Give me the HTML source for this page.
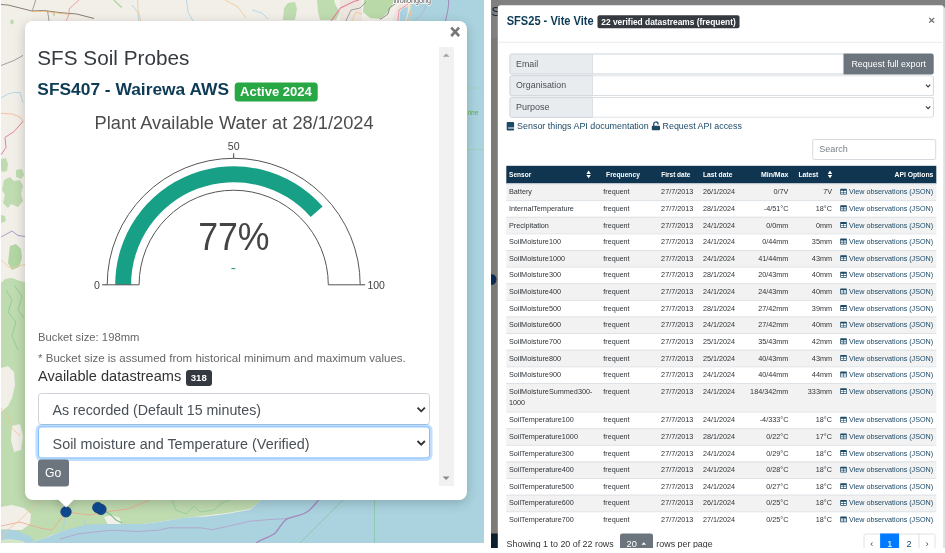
<!DOCTYPE html>
<html lang="en"><head><meta charset="utf-8"><title>SFS Soil Probes</title>
<style>
html,body{margin:0;padding:0;background:#fff;}
body{width:945px;height:553px;position:relative;overflow:hidden;font-family:"Liberation Sans",sans-serif;}
.pane{position:absolute;left:0;top:0;overflow:hidden;}
svg{position:absolute;left:0;top:0;overflow:hidden;will-change:transform;}
svg text{font-family:"Liberation Sans",sans-serif;white-space:pre;}
div{box-sizing:border-box;}
</style></head><body>

<div class="pane" id="map-pane" style="width:484px;height:543px;">
<svg id="map" width="484" height="543" viewBox="0 0 484 543">
<rect x="1" y="0" width="483" height="543" fill="#f2efe9"/>
<!-- forest / vegetation -->
<g fill="#bfdbb0">
<path d="M1 283 L5 279 L12 278 L20 281 L60 290 L60 470 L290 470 L262 499 L258 503 L250 509 L227 513 L185 518 L143 524 L106 525 L66 530 L30 543 L1 543Z"/>
<path d="M1 159 L6 158 L8 164 L7 171 L2 172 L1 170Z"/>
<path d="M16 170 L22 169 L24 175 L21 179 L16 177Z"/>
<path d="M4 180 L10 177 L14 181 L20 180 L23 186 L21 194 L23 201 L18 207 L11 204 L8 208 L3 203 L5 195 L2 190Z"/>
<path d="M1 215 L5 216 L6 221 L2 223 L1 222Z"/>
<path d="M10 246 L16 244 L21 249 L22 258 L19 267 L12 270 L8 263 L9 254Z" fill="#b2d6a3"/>
<path d="M283 20 L284 8 L288 3 L295 2 L297 9 L295 20Z"/>
<path d="M317 0 L334 0 L336 6 L340 12 L336 20 L320 20 L318 12Z"/>
<path d="M364 0 L394 0 L392 6 L388 12 L380 19 L370 18 L363 12Z" fill="#b9d9a9"/>
<ellipse cx="12" cy="22" rx="1.800" ry="2.400"/><ellipse cx="54" cy="13.500" rx="1.200" ry="2.500"/>
</g>
<g fill="#f2efe9">
<path d="M1 368 L8 366 L14 372 L15 385 L12 398 L8 406 L1 412Z"/>
<path d="M12 426 L20 424 L23 436 L21 450 L14 452 L11 440Z"/>
<path d="M1 507 L12 505 L24 508 L31 514 L30 524 L22 530 L8 530 L1 529Z"/>
<path d="M104 517 L112 515 L120 518 L121 524 L108 525Z"/>
</g>
<path d="M340 0 L362 0 L362 21 L340 21Z M392 21 L396 8 L402 2 L413 0 L409 12 L405 21Z" fill="#ece6df"/>
<!-- water -->
<path d="M413 0 L484 0 L484 543 L30 543 L53 535 L66 529.700 L87 524.400 L106 523.900 L143 523.900 L164 521.200 L185 517.800 L206 516.500 L227.500 513.800 L250 509.800 L258 503 L262 499 L406 21 L409 12Z" fill="#aad3df"/>
<path d="M399.500 21 L400 12 L403 8.500 L408 6.500 L407.500 13 L405.500 21Z" fill="#aad3df"/>
<path d="M1 531 L8 529 L18 531 L24 534 L30 536 L34 541 L30 543 L1 543Z" fill="#aad3df"/>
<path d="M1 540 L10 539 L22 541 L26 543 L1 543Z" fill="#d5e6c8"/>
<!-- roads / lines -->
<g fill="none" stroke-width="0.8">
<path d="M1 4.500 L8 5 L32 11 L43.600 10.500 L61 12.700 L76.700 14 L94 18.500" stroke="#8a7f74" stroke-width="1"/>
<path d="M32 11.600 L43.600 11.300 L61 13.500 L70 14.500" stroke="#f0bb78"/>
<path d="M35.700 0 L32.300 11" stroke="#8a8a8a"/>
<path d="M47.600 11 L49 21" stroke="#8a8a8a"/>
<path d="M79 0 L69 9 L69.300 14 L66 21" stroke="#ea8f8f"/>
<path d="M137.600 0 L138 10 L140.700 21" stroke="#f3c58e"/>
<path d="M132 5 L137.500 12 L139 21" stroke="#a6d0e4"/>
<path d="M186.500 0 L188 12 L193 21" stroke="#a6d0e4"/>
<path d="M113.700 0 L121.700 7.500" stroke="#a7d79b" stroke-width="1.300"/>
<path d="M225 0 L238 7 L246 18" stroke="#f3c58e"/>
<path d="M252 10 L262 13 L268 19" stroke="#a6d0e4"/>
<path d="M1 65.500 L14 60.500 L23 55.400" stroke="#8a8a8a"/>
<path d="M1 98 L8 94 L14 92.500 L20 92.500 L23 102.600" stroke="#a6d0e4"/>
<path d="M1 113.300 L12 114 L20 117 L23 121.400" stroke="#f3b58e"/>
<path d="M23 121.400 L14 131.600 L5 137.400 L6 147.500 L1 154.800" stroke="#e87f9c" stroke-width="1"/>
<path d="M1 237 L12 231 L18 235.500 L25 236.400" stroke="#9b86c0"/>
<path d="M1 259.600 L10 268 L25 264.500" stroke="#f3c58e"/>
<path d="M6 290 L12 300 L8 312 L16 322 L12 336 L18 350" stroke="#8cc79a"/>
<path d="M14 285 L22 296 L18 310 L24 318" stroke="#8cc79a"/>
<path d="M1 408 L8 416 L12 428 L20 436" stroke="#f3c58e"/>
<path d="M331 21 L340.500 8 L353.800 1.500 L359 0" stroke="#e87f9c" stroke-width="1.200"/>
<path d="M345.800 21 L351 10 L360 8 L366 2" stroke="#8a8a8a"/>
<path d="M352 21 L356 12 L362 14" stroke="#f3c58e"/>
<path d="M380 19.500 L388 14 L389.500 8 L396.400 3" stroke="#777" />
<path d="M397.800 21 L399 10 L405.300 6 L408.800 3" stroke="#e87f9c"/>
<path d="M411 4 L411.500 10 L408.500 21" stroke="#f3c58e" stroke-width="1.200"/>
<path d="M1 526 L20 522 L40 528 L52 530 L60 520 L66 512 L90 515 L112 511 L128 509 L150 500" stroke="#f0a58c"/>
<path d="M1 538 L10 528 L22 518 L32 508 L40 499" stroke="#f3c79a"/>
<path d="M66 512 L64 525 L60 535" stroke="#a6d0e4"/>
<path d="M84 520 L86 527" stroke="#a6d0e4"/>
<path d="M100 509 L110 514 L116 520 L122 523" stroke="#7cc08c" stroke-width="1.200"/>
<path d="M172 499 L176 510 L186 514 L194 506 L200 512 L214 510 L222 503 L232 499" stroke="#8fcc9a"/>
<path d="M60 539 L79 533.700 L111 530.200 L137.600 531.500 L158.700 530.200 L169 527.800 L201 527.800 L211.600 529.700 L224.900 527 L250 521.200 L270 519.500 L287.600 518.600" stroke="#b3a3cc" stroke-width="0.900"/>
<path d="M255.900 543 C264 538 270 537 274.400 533.700 S282 521 287.600 518.600 S300 516 306.100 512.500 S315 504 319.400 499" stroke="#a487bd" stroke-width="1.300"/>
<path d="M300 543 L344 499" stroke="#86c6a8"/>
<path d="M374.500 499 L374.500 543" stroke="#86c6a8"/>
<path d="M467 88 L484 88 M467 149.500 L484 149.500" stroke="#9dd3bd" stroke-width="1.200"/>
<path d="M448.700 0 C449 7 447 14 445.500 21" stroke="#a487bd" stroke-width="1"/>
<path d="M426.500 0 C426 8 423 15 415 20" stroke="#b7a9cf" stroke-width="0.700"/>
</g>
<text x="393" y="2.600" font-size="7.600" fill="#555" stroke="#fff" stroke-width="1.500" paint-order="stroke" textLength="38" lengthAdjust="spacingAndGlyphs">Wollongong</text>
<text x="467.500" y="115" font-size="6.500" font-style="italic" fill="#5fb04a">rine</text>
<!-- markers -->
<g fill="#0d4a94" stroke="#1d3f6e" stroke-width="0.8">
<circle cx="101" cy="509.400" r="5.200"/><circle cx="97.800" cy="507.600" r="5.200"/><circle cx="66" cy="511.800" r="5.200"/>
</g>
</svg>
<div id="popup" style="position:absolute;left:0;top:0;transform:translate(25px,21px);width:442px;height:478.6px;background:#fff;border-radius:8px;box-shadow:0 3px 12px rgba(0,0,0,.2);"></div>
<div id="popup-tip-container" style="position:absolute;left:46px;top:499px;width:40px;height:20px;overflow:hidden;"><div style="position:absolute;left:13.8px;top:-6.2px;width:12.4px;height:12.4px;background:#fff;transform:rotate(45deg);box-shadow:0 3px 12px rgba(0,0,0,.2);"></div></div>
<div style="position:absolute;left:0;top:0;transform:translate(439.00px,47.00px);width:14.50px;height:438.60px;background:#f1f1f1;"></div>
<div style="position:absolute;left:0;top:0;transform:translate(234.70px,82.40px);width:82.80px;height:19.00px;background:#28a745;border-radius:3.5px;"></div>
<div style="position:absolute;left:0;top:0;transform:translate(186.00px,370.00px);width:25.60px;height:15.90px;background:#343a40;border-radius:3px;"></div>
<div style="position:absolute;left:0;top:0;transform:translate(38.00px,393.00px);width:391.60px;height:32.00px;background:#fff;border:1px solid #ced4da;border-radius:3.5px;"></div>
<div style="position:absolute;left:0;top:0;transform:translate(38.00px,426.40px);width:391.60px;height:32.40px;background:#fff;border:1px solid #80bdff;border-radius:3.5px;box-shadow:0 0 0 2.5px rgba(0,123,255,.25);"></div>
<div style="position:absolute;left:0;top:0;transform:translate(38.00px,459.40px);width:30.90px;height:26.50px;background:#6c757d;border-radius:3px;"></div>
<svg id="popup-content" width="484" height="543" viewBox="0 0 484 543">
<path d="M115.20 284.80 A118.5 118.5 0 0 1 322.59 206.43 L310.66 216.95 A102.6 102.6 0 0 0 131.10 284.80Z" fill="#17a085"/>
<path d="M107.20 284.80 A126.5 126.5 0 0 1 360.20 284.80 L328.30 284.80 A94.6 94.6 0 0 0 139.10 284.80Z" fill="none" stroke="#555" stroke-width="1"/>
<path d="M233.70 158.30v-5 M107.20 284.80h-5 M360.20 284.80h5" stroke="#444" stroke-width="1" fill="none"/>
<text x="37.20" y="65.30" font-size="20.5" fill="#343a40" textLength="152.20" lengthAdjust="spacingAndGlyphs">SFS Soil Probes</text>
<text x="37.30" y="95.00" font-size="16" fill="#0d3b56" font-weight="bold" textLength="191.70" lengthAdjust="spacingAndGlyphs">SFS407 - Wairewa AWS</text>
<text x="240.00" y="95.70" font-size="12.3" fill="#fff" font-weight="bold" textLength="71.80" lengthAdjust="spacingAndGlyphs">Active 2024</text>
<text x="94.60" y="128.70" font-size="17.6" fill="#4c4c4c" textLength="279.00" lengthAdjust="spacingAndGlyphs">Plant Available Water at 28/1/2024</text>
<text x="233.70" y="150.00" font-size="10.6" fill="#444" text-anchor="middle">50</text>
<text x="99.80" y="288.60" font-size="10.6" fill="#444" text-anchor="end">0</text>
<text x="367.40" y="288.60" font-size="10.6" fill="#444" textLength="17.50" lengthAdjust="spacingAndGlyphs">100</text>
<text x="198.20" y="249.60" font-size="38.3" fill="#444" textLength="71.40" lengthAdjust="spacingAndGlyphs">77%</text>
<text x="230.80" y="273.00" font-size="15.5" fill="#3d9970">-</text>
<text x="38.10" y="341.20" font-size="10.8" fill="#666" textLength="101.30" lengthAdjust="spacingAndGlyphs">Bucket size: 198mm</text>
<text x="38.10" y="362.00" font-size="10.8" fill="#666" textLength="367.70" lengthAdjust="spacingAndGlyphs">* Bucket size is assumed from historical minimum and maximum values.</text>
<text x="38.00" y="381.20" font-size="14.7" fill="#333" textLength="143.30" lengthAdjust="spacingAndGlyphs">Available datastreams</text>
<text x="198.80" y="381.40" font-size="9.6" fill="#fff" font-weight="bold" text-anchor="middle">318</text>
<text x="52.60" y="415.30" font-size="14.7" fill="#495057" textLength="208.40" lengthAdjust="spacingAndGlyphs">As recorded (Default 15 minutes)</text>
<text x="52.60" y="449.00" font-size="14.7" fill="#495057" textLength="257.00" lengthAdjust="spacingAndGlyphs">Soil moisture and Temperature (Verified)</text>
<text x="45.10" y="476.50" font-size="12.3" fill="#fff" textLength="16.30" lengthAdjust="spacingAndGlyphs">Go</text>
<text x="455.20" y="38.30" font-size="17.6" fill="#757575" font-weight="bold" text-anchor="middle" stroke="#757575" stroke-width="0.6">×</text>
<path d="M417.5 407.60 l3.7 3.700 l3.700 -3.700" fill="none" stroke="#333" stroke-width="1.800"/>
<path d="M417.5 441.00 l3.7 3.700 l3.700 -3.700" fill="none" stroke="#333" stroke-width="1.800"/>
<path d="M442.800 56.800 l3.400 -3.400 l3.400 3.400z" fill="#a3a3a3"/>
<path d="M442.600 476.600 l3.500 3.500 l3.500 -3.500z" fill="#8a8a8a"/>
</svg>
</div>
<div class="pane" id="modal-pane" style="width:945px;height:548px;">
<div style="position:absolute;left:0;top:0;transform:translate(491.00px,0.00px);width:454.00px;height:548.00px;background:#808080;"></div>
<div style="position:absolute;left:0;top:0;transform:translate(491.00px,38.00px);width:8.00px;height:510.00px;background:#7b7a77;"></div>
<div style="position:absolute;left:0;top:0;transform:translate(491.00px,533.50px);width:8.00px;height:15.00px;background:#0a1e2b;"></div>
<svg width="945" height="548" viewBox="0 0 945 548"><text x="491.60" y="16.20" font-size="12.6" fill="#0c2433">S</text><path d="M491 274 A5.500 5.500 0 0 1 491 285Z" fill="#0a2850"/></svg>
<div style="position:absolute;left:0;top:0;transform:translate(497.80px,5.20px);width:446.30px;height:560.00px;background:#fff;border-radius:3px 2.5px 0 0;"></div>
<div style="position:absolute;left:0;top:0;transform:translate(944.10px,7.50px);width:0.90px;height:541.00px;background:#ececec;"></div>
<div style="position:absolute;left:0;top:0;transform:translate(498.50px,41.80px);width:446.00px;height:1.00px;background:#e9ecef;"></div>
<div style="position:absolute;left:0;top:0;transform:translate(597.50px,15.20px);width:141.70px;height:12.50px;background:#343a40;border-radius:2px;"></div>
<div style="position:absolute;left:0;top:0;transform:translate(509.40px,53.50px);width:83.50px;height:20.70px;background:#e9ecef;border:1px solid #ced4da;border-radius:2.300px 0 0 2.300px;"></div>
<div style="position:absolute;left:0;top:0;transform:translate(592.90px,53.50px);width:250.80px;height:20.70px;background:#fff;border:1px solid #ced4da;border-left:none;"></div>
<div style="position:absolute;left:0;top:0;transform:translate(509.40px,75.20px);width:83.50px;height:20.70px;background:#e9ecef;border:1px solid #ced4da;border-radius:2.300px 0 0 2.300px;"></div>
<div style="position:absolute;left:0;top:0;transform:translate(592.90px,75.20px);width:340.90px;height:20.70px;background:#fff;border:1px solid #ced4da;border-left:none;border-radius:0 2.300px 2.300px 0;"></div>
<div style="position:absolute;left:0;top:0;transform:translate(509.40px,96.80px);width:83.50px;height:20.70px;background:#e9ecef;border:1px solid #ced4da;border-radius:2.300px 0 0 2.300px;"></div>
<div style="position:absolute;left:0;top:0;transform:translate(592.90px,96.80px);width:340.90px;height:20.70px;background:#fff;border:1px solid #ced4da;border-left:none;border-radius:0 2.300px 2.300px 0;"></div>
<div style="position:absolute;left:0;top:0;transform:translate(843.70px,53.50px);width:90.10px;height:21.20px;background:#6c757d;border-radius:0 2.300px 2.300px 0;"></div>
<div style="position:absolute;left:0;top:0;transform:translate(812.20px,139.00px);width:123.60px;height:20.60px;background:#fff;border:1px solid #d6dade;border-radius:2.300px;"></div>
<div style="position:absolute;left:0;top:0;transform:translate(506.30px,165.80px);width:429.60px;height:17.70px;background:#0f3550;"></div>
<div style="position:absolute;left:0;top:0;transform:translate(506.30px,183.50px);width:429.60px;height:16.62px;background:#f2f2f2;border-top:0.6px solid #dee2e6;"></div>
<div style="position:absolute;left:0;top:0;transform:translate(506.30px,200.12px);width:429.60px;height:16.62px;background:#fff;border-top:0.6px solid #dee2e6;"></div>
<div style="position:absolute;left:0;top:0;transform:translate(506.30px,216.74px);width:429.60px;height:16.62px;background:#f2f2f2;border-top:0.6px solid #dee2e6;"></div>
<div style="position:absolute;left:0;top:0;transform:translate(506.30px,233.36px);width:429.60px;height:16.62px;background:#fff;border-top:0.6px solid #dee2e6;"></div>
<div style="position:absolute;left:0;top:0;transform:translate(506.30px,249.98px);width:429.60px;height:16.62px;background:#f2f2f2;border-top:0.6px solid #dee2e6;"></div>
<div style="position:absolute;left:0;top:0;transform:translate(506.30px,266.60px);width:429.60px;height:16.62px;background:#fff;border-top:0.6px solid #dee2e6;"></div>
<div style="position:absolute;left:0;top:0;transform:translate(506.30px,283.22px);width:429.60px;height:16.62px;background:#f2f2f2;border-top:0.6px solid #dee2e6;"></div>
<div style="position:absolute;left:0;top:0;transform:translate(506.30px,299.84px);width:429.60px;height:16.62px;background:#fff;border-top:0.6px solid #dee2e6;"></div>
<div style="position:absolute;left:0;top:0;transform:translate(506.30px,316.46px);width:429.60px;height:16.62px;background:#f2f2f2;border-top:0.6px solid #dee2e6;"></div>
<div style="position:absolute;left:0;top:0;transform:translate(506.30px,333.08px);width:429.60px;height:16.62px;background:#fff;border-top:0.6px solid #dee2e6;"></div>
<div style="position:absolute;left:0;top:0;transform:translate(506.30px,349.70px);width:429.60px;height:16.62px;background:#f2f2f2;border-top:0.6px solid #dee2e6;"></div>
<div style="position:absolute;left:0;top:0;transform:translate(506.30px,366.32px);width:429.60px;height:16.62px;background:#fff;border-top:0.6px solid #dee2e6;"></div>
<div style="position:absolute;left:0;top:0;transform:translate(506.30px,382.94px);width:429.60px;height:28.60px;background:#f2f2f2;border-top:0.6px solid #dee2e6;"></div>
<div style="position:absolute;left:0;top:0;transform:translate(506.30px,411.54px);width:429.60px;height:16.62px;background:#fff;border-top:0.6px solid #dee2e6;"></div>
<div style="position:absolute;left:0;top:0;transform:translate(506.30px,428.16px);width:429.60px;height:16.62px;background:#f2f2f2;border-top:0.6px solid #dee2e6;"></div>
<div style="position:absolute;left:0;top:0;transform:translate(506.30px,444.78px);width:429.60px;height:16.62px;background:#fff;border-top:0.6px solid #dee2e6;"></div>
<div style="position:absolute;left:0;top:0;transform:translate(506.30px,461.40px);width:429.60px;height:16.62px;background:#f2f2f2;border-top:0.6px solid #dee2e6;"></div>
<div style="position:absolute;left:0;top:0;transform:translate(506.30px,478.02px);width:429.60px;height:16.62px;background:#fff;border-top:0.6px solid #dee2e6;"></div>
<div style="position:absolute;left:0;top:0;transform:translate(506.30px,494.64px);width:429.60px;height:16.62px;background:#f2f2f2;border-top:0.6px solid #dee2e6;"></div>
<div style="position:absolute;left:0;top:0;transform:translate(506.30px,511.26px);width:429.60px;height:16.62px;background:#fff;border-top:0.6px solid #dee2e6;"></div>
<div style="position:absolute;left:0;top:0;transform:translate(620.00px,533.40px);width:33.40px;height:20.00px;background:#6c757d;border-radius:2.300px;"></div>
<div style="position:absolute;left:0;top:0;transform:translate(863.50px,533.50px);width:72.00px;height:20.00px;background:#fff;border:0.6px solid #dee2e6;border-radius:2.300px;"></div>
<div style="position:absolute;left:0;top:0;transform:translate(880.10px,533.50px);width:19.40px;height:20.00px;background:#007bff;"></div>
<div style="position:absolute;left:0;top:0;transform:translate(918.50px,533.50px);width:0.60px;height:20.00px;background:#dee2e6;"></div>
<svg id="modal-content" width="945" height="548" viewBox="0 0 945 548">
<text x="506.70" y="24.90" font-size="12.0" fill="#0d3b56" font-weight="bold" textLength="87.00" lengthAdjust="spacingAndGlyphs">SFS25 - Vite Vite</text>
<text x="601.30" y="24.70" font-size="8.7" fill="#fff" font-weight="bold" textLength="134.50" lengthAdjust="spacingAndGlyphs">22 verified datastreams (frequent)</text>
<text x="931.70" y="24.40" font-size="11.6" fill="#6e6e6e" font-weight="bold" text-anchor="middle">×</text>
<text x="516.00" y="66.60" font-size="9.0" fill="#495057" textLength="22.10" lengthAdjust="spacingAndGlyphs">Email</text>
<text x="516.00" y="88.30" font-size="9.0" fill="#495057" textLength="50.10" lengthAdjust="spacingAndGlyphs">Organisation</text>
<text x="516.00" y="110.00" font-size="9.0" fill="#495057">Purpose</text>
<text x="851.40" y="66.70" font-size="9.0" fill="#fff" textLength="74.50" lengthAdjust="spacingAndGlyphs">Request full export</text>
<path d="M925.900 84.70 l2.200 2.200 l2.200 -2.200" fill="none" stroke="#343a40" stroke-width="1.100"/>
<path d="M925.900 106.40 l2.200 2.200 l2.200 -2.200" fill="none" stroke="#343a40" stroke-width="1.100"/>
<rect x="506.700" y="121.900" width="7.400" height="8.600" rx="1" fill="#1c4966"/><path d="M508.100 127.500h6v1h-6z" fill="#fff"/>
<text x="517.10" y="129.00" font-size="9.0" fill="#1c4966" textLength="131.60" lengthAdjust="spacingAndGlyphs">Sensor things API documentation</text>
<rect x="651.800" y="125.700" width="8.200" height="4.500" rx="0.700" fill="#1c4966"/><path d="M653.700 126v-1.700a2.200 2.200 0 0 1 4.400 -0.200v0.500" fill="none" stroke="#1c4966" stroke-width="1.250"/>
<text x="662.60" y="129.00" font-size="9.0" fill="#1c4966" textLength="79.30" lengthAdjust="spacingAndGlyphs">Request API access</text>
<text x="819.30" y="152.30" font-size="9.0" fill="#7a828a">Search</text>
<text x="509.10" y="176.70" font-size="6.9" fill="#fff" font-weight="bold" textLength="22.10" lengthAdjust="spacingAndGlyphs">Sensor</text>
<text x="606.10" y="176.70" font-size="6.9" fill="#fff" font-weight="bold" textLength="33.80" lengthAdjust="spacingAndGlyphs">Frequency</text>
<text x="661.20" y="176.70" font-size="6.9" fill="#fff" font-weight="bold" textLength="29.30" lengthAdjust="spacingAndGlyphs">First date</text>
<text x="702.90" y="176.70" font-size="6.9" fill="#fff" font-weight="bold" textLength="29.50" lengthAdjust="spacingAndGlyphs">Last date</text>
<text x="760.90" y="176.70" font-size="6.9" fill="#fff" font-weight="bold" textLength="27.50" lengthAdjust="spacingAndGlyphs">Min/Max</text>
<text x="798.40" y="176.70" font-size="6.9" fill="#fff" font-weight="bold" textLength="19.90" lengthAdjust="spacingAndGlyphs">Latest</text>
<text x="894.50" y="176.70" font-size="6.9" fill="#fff" font-weight="bold" textLength="38.80" lengthAdjust="spacingAndGlyphs">API Options</text>
<path d="M586.40 173.900 l2.200 -3.300 l2.200 3.300z M586.40 174.900 l2.200 3.300 l2.200 -3.300z" fill="#fff"/>
<path d="M827.80 173.900 l2.200 -3.300 l2.200 3.300z M827.80 174.900 l2.200 3.300 l2.200 -3.300z" fill="#fff"/>
<text x="509.00" y="194.35" font-size="7.25" fill="#2f3337">Battery</text>
<text x="603.30" y="194.35" font-size="7.25" fill="#2f3337" textLength="26.30" lengthAdjust="spacingAndGlyphs">frequent</text>
<text x="661.10" y="194.35" font-size="7.25" fill="#2f3337" textLength="32.30" lengthAdjust="spacingAndGlyphs">27/7/2013</text>
<text x="702.90" y="194.35" font-size="7.25" fill="#2f3337" textLength="32.00" lengthAdjust="spacingAndGlyphs">26/1/2024</text>
<text x="788.40" y="194.35" font-size="7.25" fill="#2f3337" text-anchor="end">0/7V</text>
<text x="832.00" y="194.35" font-size="7.25" fill="#2f3337" text-anchor="end">7V</text>
<rect x="840.20" y="188.75" width="6.600" height="5.800" rx="0.600" fill="#1c4966"/><path d="M840.90 190.65h2.300v1.300h-2.300z M843.80 190.65h2.300v1.300h-2.300z M840.90 192.55h2.300v1.300h-2.300z M843.80 192.55h2.300v1.300h-2.300z" fill="#fff"/>
<text x="933.20" y="194.35" font-size="7.25" fill="#1c4966" text-anchor="end" textLength="84.20" lengthAdjust="spacingAndGlyphs">View observations (JSON)</text>
<text x="509.00" y="210.97" font-size="7.25" fill="#2f3337">InternalTemperature</text>
<text x="603.30" y="210.97" font-size="7.25" fill="#2f3337" textLength="26.30" lengthAdjust="spacingAndGlyphs">frequent</text>
<text x="661.10" y="210.97" font-size="7.25" fill="#2f3337" textLength="32.30" lengthAdjust="spacingAndGlyphs">27/7/2013</text>
<text x="702.90" y="210.97" font-size="7.25" fill="#2f3337" textLength="32.00" lengthAdjust="spacingAndGlyphs">28/1/2024</text>
<text x="788.40" y="210.97" font-size="7.25" fill="#2f3337" text-anchor="end">-4/51°C</text>
<text x="832.00" y="210.97" font-size="7.25" fill="#2f3337" text-anchor="end">18°C</text>
<rect x="840.20" y="205.37" width="6.600" height="5.800" rx="0.600" fill="#1c4966"/><path d="M840.90 207.27h2.300v1.300h-2.300z M843.80 207.27h2.300v1.300h-2.300z M840.90 209.17h2.300v1.300h-2.300z M843.80 209.17h2.300v1.300h-2.300z" fill="#fff"/>
<text x="933.20" y="210.97" font-size="7.25" fill="#1c4966" text-anchor="end" textLength="84.20" lengthAdjust="spacingAndGlyphs">View observations (JSON)</text>
<text x="509.00" y="227.59" font-size="7.25" fill="#2f3337">Precipitation</text>
<text x="603.30" y="227.59" font-size="7.25" fill="#2f3337" textLength="26.30" lengthAdjust="spacingAndGlyphs">frequent</text>
<text x="661.10" y="227.59" font-size="7.25" fill="#2f3337" textLength="32.30" lengthAdjust="spacingAndGlyphs">27/7/2013</text>
<text x="702.90" y="227.59" font-size="7.25" fill="#2f3337" textLength="32.00" lengthAdjust="spacingAndGlyphs">24/1/2024</text>
<text x="788.40" y="227.59" font-size="7.25" fill="#2f3337" text-anchor="end">0/0mm</text>
<text x="832.00" y="227.59" font-size="7.25" fill="#2f3337" text-anchor="end">0mm</text>
<rect x="840.20" y="221.99" width="6.600" height="5.800" rx="0.600" fill="#1c4966"/><path d="M840.90 223.89h2.300v1.300h-2.300z M843.80 223.89h2.300v1.300h-2.300z M840.90 225.79h2.300v1.300h-2.300z M843.80 225.79h2.300v1.300h-2.300z" fill="#fff"/>
<text x="933.20" y="227.59" font-size="7.25" fill="#1c4966" text-anchor="end" textLength="84.20" lengthAdjust="spacingAndGlyphs">View observations (JSON)</text>
<text x="509.00" y="244.21" font-size="7.25" fill="#2f3337">SoilMoisture100</text>
<text x="603.30" y="244.21" font-size="7.25" fill="#2f3337" textLength="26.30" lengthAdjust="spacingAndGlyphs">frequent</text>
<text x="661.10" y="244.21" font-size="7.25" fill="#2f3337" textLength="32.30" lengthAdjust="spacingAndGlyphs">27/7/2013</text>
<text x="702.90" y="244.21" font-size="7.25" fill="#2f3337" textLength="32.00" lengthAdjust="spacingAndGlyphs">24/1/2024</text>
<text x="788.40" y="244.21" font-size="7.25" fill="#2f3337" text-anchor="end">0/44mm</text>
<text x="832.00" y="244.21" font-size="7.25" fill="#2f3337" text-anchor="end">35mm</text>
<rect x="840.20" y="238.61" width="6.600" height="5.800" rx="0.600" fill="#1c4966"/><path d="M840.90 240.51h2.300v1.300h-2.300z M843.80 240.51h2.300v1.300h-2.300z M840.90 242.41h2.300v1.300h-2.300z M843.80 242.41h2.300v1.300h-2.300z" fill="#fff"/>
<text x="933.20" y="244.21" font-size="7.25" fill="#1c4966" text-anchor="end" textLength="84.20" lengthAdjust="spacingAndGlyphs">View observations (JSON)</text>
<text x="509.00" y="260.83" font-size="7.25" fill="#2f3337">SoilMoisture1000</text>
<text x="603.30" y="260.83" font-size="7.25" fill="#2f3337" textLength="26.30" lengthAdjust="spacingAndGlyphs">frequent</text>
<text x="661.10" y="260.83" font-size="7.25" fill="#2f3337" textLength="32.30" lengthAdjust="spacingAndGlyphs">27/7/2013</text>
<text x="702.90" y="260.83" font-size="7.25" fill="#2f3337" textLength="32.00" lengthAdjust="spacingAndGlyphs">24/1/2024</text>
<text x="788.40" y="260.83" font-size="7.25" fill="#2f3337" text-anchor="end">41/44mm</text>
<text x="832.00" y="260.83" font-size="7.25" fill="#2f3337" text-anchor="end">43mm</text>
<rect x="840.20" y="255.23" width="6.600" height="5.800" rx="0.600" fill="#1c4966"/><path d="M840.90 257.13h2.300v1.300h-2.300z M843.80 257.13h2.300v1.300h-2.300z M840.90 259.03h2.300v1.300h-2.300z M843.80 259.03h2.300v1.300h-2.300z" fill="#fff"/>
<text x="933.20" y="260.83" font-size="7.25" fill="#1c4966" text-anchor="end" textLength="84.20" lengthAdjust="spacingAndGlyphs">View observations (JSON)</text>
<text x="509.00" y="277.45" font-size="7.25" fill="#2f3337">SoilMoisture300</text>
<text x="603.30" y="277.45" font-size="7.25" fill="#2f3337" textLength="26.30" lengthAdjust="spacingAndGlyphs">frequent</text>
<text x="661.10" y="277.45" font-size="7.25" fill="#2f3337" textLength="32.30" lengthAdjust="spacingAndGlyphs">27/7/2013</text>
<text x="702.90" y="277.45" font-size="7.25" fill="#2f3337" textLength="32.00" lengthAdjust="spacingAndGlyphs">28/1/2024</text>
<text x="788.40" y="277.45" font-size="7.25" fill="#2f3337" text-anchor="end">20/43mm</text>
<text x="832.00" y="277.45" font-size="7.25" fill="#2f3337" text-anchor="end">40mm</text>
<rect x="840.20" y="271.85" width="6.600" height="5.800" rx="0.600" fill="#1c4966"/><path d="M840.90 273.75h2.300v1.300h-2.300z M843.80 273.75h2.300v1.300h-2.300z M840.90 275.65h2.300v1.300h-2.300z M843.80 275.65h2.300v1.300h-2.300z" fill="#fff"/>
<text x="933.20" y="277.45" font-size="7.25" fill="#1c4966" text-anchor="end" textLength="84.20" lengthAdjust="spacingAndGlyphs">View observations (JSON)</text>
<text x="509.00" y="294.07" font-size="7.25" fill="#2f3337">SoilMoisture400</text>
<text x="603.30" y="294.07" font-size="7.25" fill="#2f3337" textLength="26.30" lengthAdjust="spacingAndGlyphs">frequent</text>
<text x="661.10" y="294.07" font-size="7.25" fill="#2f3337" textLength="32.30" lengthAdjust="spacingAndGlyphs">27/7/2013</text>
<text x="702.90" y="294.07" font-size="7.25" fill="#2f3337" textLength="32.00" lengthAdjust="spacingAndGlyphs">24/1/2024</text>
<text x="788.40" y="294.07" font-size="7.25" fill="#2f3337" text-anchor="end">24/43mm</text>
<text x="832.00" y="294.07" font-size="7.25" fill="#2f3337" text-anchor="end">40mm</text>
<rect x="840.20" y="288.47" width="6.600" height="5.800" rx="0.600" fill="#1c4966"/><path d="M840.90 290.37h2.300v1.300h-2.300z M843.80 290.37h2.300v1.300h-2.300z M840.90 292.27h2.300v1.300h-2.300z M843.80 292.27h2.300v1.300h-2.300z" fill="#fff"/>
<text x="933.20" y="294.07" font-size="7.25" fill="#1c4966" text-anchor="end" textLength="84.20" lengthAdjust="spacingAndGlyphs">View observations (JSON)</text>
<text x="509.00" y="310.69" font-size="7.25" fill="#2f3337">SoilMoisture500</text>
<text x="603.30" y="310.69" font-size="7.25" fill="#2f3337" textLength="26.30" lengthAdjust="spacingAndGlyphs">frequent</text>
<text x="661.10" y="310.69" font-size="7.25" fill="#2f3337" textLength="32.30" lengthAdjust="spacingAndGlyphs">27/7/2013</text>
<text x="702.90" y="310.69" font-size="7.25" fill="#2f3337" textLength="32.00" lengthAdjust="spacingAndGlyphs">28/1/2024</text>
<text x="788.40" y="310.69" font-size="7.25" fill="#2f3337" text-anchor="end">27/42mm</text>
<text x="832.00" y="310.69" font-size="7.25" fill="#2f3337" text-anchor="end">39mm</text>
<rect x="840.20" y="305.09" width="6.600" height="5.800" rx="0.600" fill="#1c4966"/><path d="M840.90 306.99h2.300v1.300h-2.300z M843.80 306.99h2.300v1.300h-2.300z M840.90 308.89h2.300v1.300h-2.300z M843.80 308.89h2.300v1.300h-2.300z" fill="#fff"/>
<text x="933.20" y="310.69" font-size="7.25" fill="#1c4966" text-anchor="end" textLength="84.20" lengthAdjust="spacingAndGlyphs">View observations (JSON)</text>
<text x="509.00" y="327.31" font-size="7.25" fill="#2f3337">SoilMoisture600</text>
<text x="603.30" y="327.31" font-size="7.25" fill="#2f3337" textLength="26.30" lengthAdjust="spacingAndGlyphs">frequent</text>
<text x="661.10" y="327.31" font-size="7.25" fill="#2f3337" textLength="32.30" lengthAdjust="spacingAndGlyphs">27/7/2013</text>
<text x="702.90" y="327.31" font-size="7.25" fill="#2f3337" textLength="32.00" lengthAdjust="spacingAndGlyphs">24/1/2024</text>
<text x="788.40" y="327.31" font-size="7.25" fill="#2f3337" text-anchor="end">27/42mm</text>
<text x="832.00" y="327.31" font-size="7.25" fill="#2f3337" text-anchor="end">40mm</text>
<rect x="840.20" y="321.71" width="6.600" height="5.800" rx="0.600" fill="#1c4966"/><path d="M840.90 323.61h2.300v1.300h-2.300z M843.80 323.61h2.300v1.300h-2.300z M840.90 325.51h2.300v1.300h-2.300z M843.80 325.51h2.300v1.300h-2.300z" fill="#fff"/>
<text x="933.20" y="327.31" font-size="7.25" fill="#1c4966" text-anchor="end" textLength="84.20" lengthAdjust="spacingAndGlyphs">View observations (JSON)</text>
<text x="509.00" y="343.93" font-size="7.25" fill="#2f3337">SoilMoisture700</text>
<text x="603.30" y="343.93" font-size="7.25" fill="#2f3337" textLength="26.30" lengthAdjust="spacingAndGlyphs">frequent</text>
<text x="661.10" y="343.93" font-size="7.25" fill="#2f3337" textLength="32.30" lengthAdjust="spacingAndGlyphs">27/7/2013</text>
<text x="702.90" y="343.93" font-size="7.25" fill="#2f3337" textLength="32.00" lengthAdjust="spacingAndGlyphs">25/1/2024</text>
<text x="788.40" y="343.93" font-size="7.25" fill="#2f3337" text-anchor="end">35/43mm</text>
<text x="832.00" y="343.93" font-size="7.25" fill="#2f3337" text-anchor="end">42mm</text>
<rect x="840.20" y="338.33" width="6.600" height="5.800" rx="0.600" fill="#1c4966"/><path d="M840.90 340.23h2.300v1.300h-2.300z M843.80 340.23h2.300v1.300h-2.300z M840.90 342.13h2.300v1.300h-2.300z M843.80 342.13h2.300v1.300h-2.300z" fill="#fff"/>
<text x="933.20" y="343.93" font-size="7.25" fill="#1c4966" text-anchor="end" textLength="84.20" lengthAdjust="spacingAndGlyphs">View observations (JSON)</text>
<text x="509.00" y="360.55" font-size="7.25" fill="#2f3337">SoilMoisture800</text>
<text x="603.30" y="360.55" font-size="7.25" fill="#2f3337" textLength="26.30" lengthAdjust="spacingAndGlyphs">frequent</text>
<text x="661.10" y="360.55" font-size="7.25" fill="#2f3337" textLength="32.30" lengthAdjust="spacingAndGlyphs">27/7/2013</text>
<text x="702.90" y="360.55" font-size="7.25" fill="#2f3337" textLength="32.00" lengthAdjust="spacingAndGlyphs">25/1/2024</text>
<text x="788.40" y="360.55" font-size="7.25" fill="#2f3337" text-anchor="end">40/43mm</text>
<text x="832.00" y="360.55" font-size="7.25" fill="#2f3337" text-anchor="end">43mm</text>
<rect x="840.20" y="354.95" width="6.600" height="5.800" rx="0.600" fill="#1c4966"/><path d="M840.90 356.85h2.300v1.300h-2.300z M843.80 356.85h2.300v1.300h-2.300z M840.90 358.75h2.300v1.300h-2.300z M843.80 358.75h2.300v1.300h-2.300z" fill="#fff"/>
<text x="933.20" y="360.55" font-size="7.25" fill="#1c4966" text-anchor="end" textLength="84.20" lengthAdjust="spacingAndGlyphs">View observations (JSON)</text>
<text x="509.00" y="377.17" font-size="7.25" fill="#2f3337">SoilMoisture900</text>
<text x="603.30" y="377.17" font-size="7.25" fill="#2f3337" textLength="26.30" lengthAdjust="spacingAndGlyphs">frequent</text>
<text x="661.10" y="377.17" font-size="7.25" fill="#2f3337" textLength="32.30" lengthAdjust="spacingAndGlyphs">27/7/2013</text>
<text x="702.90" y="377.17" font-size="7.25" fill="#2f3337" textLength="32.00" lengthAdjust="spacingAndGlyphs">24/1/2024</text>
<text x="788.40" y="377.17" font-size="7.25" fill="#2f3337" text-anchor="end">40/44mm</text>
<text x="832.00" y="377.17" font-size="7.25" fill="#2f3337" text-anchor="end">44mm</text>
<rect x="840.20" y="371.57" width="6.600" height="5.800" rx="0.600" fill="#1c4966"/><path d="M840.90 373.47h2.300v1.300h-2.300z M843.80 373.47h2.300v1.300h-2.300z M840.90 375.37h2.300v1.300h-2.300z M843.80 375.37h2.300v1.300h-2.300z" fill="#fff"/>
<text x="933.20" y="377.17" font-size="7.25" fill="#1c4966" text-anchor="end" textLength="84.20" lengthAdjust="spacingAndGlyphs">View observations (JSON)</text>
<text x="509.00" y="393.79" font-size="7.25" fill="#2f3337">SoilMoistureSummed300-</text>
<text x="509.00" y="404.79" font-size="7.25" fill="#2f3337">1000</text>
<text x="603.30" y="393.79" font-size="7.25" fill="#2f3337" textLength="26.30" lengthAdjust="spacingAndGlyphs">frequent</text>
<text x="661.10" y="393.79" font-size="7.25" fill="#2f3337" textLength="32.30" lengthAdjust="spacingAndGlyphs">27/7/2013</text>
<text x="702.90" y="393.79" font-size="7.25" fill="#2f3337" textLength="32.00" lengthAdjust="spacingAndGlyphs">24/1/2024</text>
<text x="788.40" y="393.79" font-size="7.25" fill="#2f3337" text-anchor="end">184/342mm</text>
<text x="832.00" y="393.79" font-size="7.25" fill="#2f3337" text-anchor="end">333mm</text>
<rect x="840.20" y="388.19" width="6.600" height="5.800" rx="0.600" fill="#1c4966"/><path d="M840.90 390.09h2.300v1.300h-2.300z M843.80 390.09h2.300v1.300h-2.300z M840.90 391.99h2.300v1.300h-2.300z M843.80 391.99h2.300v1.300h-2.300z" fill="#fff"/>
<text x="933.20" y="393.79" font-size="7.25" fill="#1c4966" text-anchor="end" textLength="84.20" lengthAdjust="spacingAndGlyphs">View observations (JSON)</text>
<text x="509.00" y="422.39" font-size="7.25" fill="#2f3337">SoilTemperature100</text>
<text x="603.30" y="422.39" font-size="7.25" fill="#2f3337" textLength="26.30" lengthAdjust="spacingAndGlyphs">frequent</text>
<text x="661.10" y="422.39" font-size="7.25" fill="#2f3337" textLength="32.30" lengthAdjust="spacingAndGlyphs">27/7/2013</text>
<text x="702.90" y="422.39" font-size="7.25" fill="#2f3337" textLength="32.00" lengthAdjust="spacingAndGlyphs">24/1/2024</text>
<text x="788.40" y="422.39" font-size="7.25" fill="#2f3337" text-anchor="end">-4/333°C</text>
<text x="832.00" y="422.39" font-size="7.25" fill="#2f3337" text-anchor="end">18°C</text>
<rect x="840.20" y="416.79" width="6.600" height="5.800" rx="0.600" fill="#1c4966"/><path d="M840.90 418.69h2.300v1.300h-2.300z M843.80 418.69h2.300v1.300h-2.300z M840.90 420.59h2.300v1.300h-2.300z M843.80 420.59h2.300v1.300h-2.300z" fill="#fff"/>
<text x="933.20" y="422.39" font-size="7.25" fill="#1c4966" text-anchor="end" textLength="84.20" lengthAdjust="spacingAndGlyphs">View observations (JSON)</text>
<text x="509.00" y="439.01" font-size="7.25" fill="#2f3337">SoilTemperature1000</text>
<text x="603.30" y="439.01" font-size="7.25" fill="#2f3337" textLength="26.30" lengthAdjust="spacingAndGlyphs">frequent</text>
<text x="661.10" y="439.01" font-size="7.25" fill="#2f3337" textLength="32.30" lengthAdjust="spacingAndGlyphs">27/7/2013</text>
<text x="702.90" y="439.01" font-size="7.25" fill="#2f3337" textLength="32.00" lengthAdjust="spacingAndGlyphs">28/1/2024</text>
<text x="788.40" y="439.01" font-size="7.25" fill="#2f3337" text-anchor="end">0/22°C</text>
<text x="832.00" y="439.01" font-size="7.25" fill="#2f3337" text-anchor="end">17°C</text>
<rect x="840.20" y="433.41" width="6.600" height="5.800" rx="0.600" fill="#1c4966"/><path d="M840.90 435.31h2.300v1.300h-2.300z M843.80 435.31h2.300v1.300h-2.300z M840.90 437.21h2.300v1.300h-2.300z M843.80 437.21h2.300v1.300h-2.300z" fill="#fff"/>
<text x="933.20" y="439.01" font-size="7.25" fill="#1c4966" text-anchor="end" textLength="84.20" lengthAdjust="spacingAndGlyphs">View observations (JSON)</text>
<text x="509.00" y="455.63" font-size="7.25" fill="#2f3337">SoilTemperature300</text>
<text x="603.30" y="455.63" font-size="7.25" fill="#2f3337" textLength="26.30" lengthAdjust="spacingAndGlyphs">frequent</text>
<text x="661.10" y="455.63" font-size="7.25" fill="#2f3337" textLength="32.30" lengthAdjust="spacingAndGlyphs">27/7/2013</text>
<text x="702.90" y="455.63" font-size="7.25" fill="#2f3337" textLength="32.00" lengthAdjust="spacingAndGlyphs">24/1/2024</text>
<text x="788.40" y="455.63" font-size="7.25" fill="#2f3337" text-anchor="end">0/29°C</text>
<text x="832.00" y="455.63" font-size="7.25" fill="#2f3337" text-anchor="end">18°C</text>
<rect x="840.20" y="450.03" width="6.600" height="5.800" rx="0.600" fill="#1c4966"/><path d="M840.90 451.93h2.300v1.300h-2.300z M843.80 451.93h2.300v1.300h-2.300z M840.90 453.83h2.300v1.300h-2.300z M843.80 453.83h2.300v1.300h-2.300z" fill="#fff"/>
<text x="933.20" y="455.63" font-size="7.25" fill="#1c4966" text-anchor="end" textLength="84.20" lengthAdjust="spacingAndGlyphs">View observations (JSON)</text>
<text x="509.00" y="472.25" font-size="7.25" fill="#2f3337">SoilTemperature400</text>
<text x="603.30" y="472.25" font-size="7.25" fill="#2f3337" textLength="26.30" lengthAdjust="spacingAndGlyphs">frequent</text>
<text x="661.10" y="472.25" font-size="7.25" fill="#2f3337" textLength="32.30" lengthAdjust="spacingAndGlyphs">27/7/2013</text>
<text x="702.90" y="472.25" font-size="7.25" fill="#2f3337" textLength="32.00" lengthAdjust="spacingAndGlyphs">24/1/2024</text>
<text x="788.40" y="472.25" font-size="7.25" fill="#2f3337" text-anchor="end">0/28°C</text>
<text x="832.00" y="472.25" font-size="7.25" fill="#2f3337" text-anchor="end">18°C</text>
<rect x="840.20" y="466.65" width="6.600" height="5.800" rx="0.600" fill="#1c4966"/><path d="M840.90 468.55h2.300v1.300h-2.300z M843.80 468.55h2.300v1.300h-2.300z M840.90 470.45h2.300v1.300h-2.300z M843.80 470.45h2.300v1.300h-2.300z" fill="#fff"/>
<text x="933.20" y="472.25" font-size="7.25" fill="#1c4966" text-anchor="end" textLength="84.20" lengthAdjust="spacingAndGlyphs">View observations (JSON)</text>
<text x="509.00" y="488.87" font-size="7.25" fill="#2f3337">SoilTemperature500</text>
<text x="603.30" y="488.87" font-size="7.25" fill="#2f3337" textLength="26.30" lengthAdjust="spacingAndGlyphs">frequent</text>
<text x="661.10" y="488.87" font-size="7.25" fill="#2f3337" textLength="32.30" lengthAdjust="spacingAndGlyphs">27/7/2013</text>
<text x="702.90" y="488.87" font-size="7.25" fill="#2f3337" textLength="32.00" lengthAdjust="spacingAndGlyphs">24/1/2024</text>
<text x="788.40" y="488.87" font-size="7.25" fill="#2f3337" text-anchor="end">0/27°C</text>
<text x="832.00" y="488.87" font-size="7.25" fill="#2f3337" text-anchor="end">18°C</text>
<rect x="840.20" y="483.27" width="6.600" height="5.800" rx="0.600" fill="#1c4966"/><path d="M840.90 485.17h2.300v1.300h-2.300z M843.80 485.17h2.300v1.300h-2.300z M840.90 487.07h2.300v1.300h-2.300z M843.80 487.07h2.300v1.300h-2.300z" fill="#fff"/>
<text x="933.20" y="488.87" font-size="7.25" fill="#1c4966" text-anchor="end" textLength="84.20" lengthAdjust="spacingAndGlyphs">View observations (JSON)</text>
<text x="509.00" y="505.49" font-size="7.25" fill="#2f3337">SoilTemperature600</text>
<text x="603.30" y="505.49" font-size="7.25" fill="#2f3337" textLength="26.30" lengthAdjust="spacingAndGlyphs">frequent</text>
<text x="661.10" y="505.49" font-size="7.25" fill="#2f3337" textLength="32.30" lengthAdjust="spacingAndGlyphs">27/7/2013</text>
<text x="702.90" y="505.49" font-size="7.25" fill="#2f3337" textLength="32.00" lengthAdjust="spacingAndGlyphs">26/1/2024</text>
<text x="788.40" y="505.49" font-size="7.25" fill="#2f3337" text-anchor="end">0/25°C</text>
<text x="832.00" y="505.49" font-size="7.25" fill="#2f3337" text-anchor="end">18°C</text>
<rect x="840.20" y="499.89" width="6.600" height="5.800" rx="0.600" fill="#1c4966"/><path d="M840.90 501.79h2.300v1.300h-2.300z M843.80 501.79h2.300v1.300h-2.300z M840.90 503.69h2.300v1.300h-2.300z M843.80 503.69h2.300v1.300h-2.300z" fill="#fff"/>
<text x="933.20" y="505.49" font-size="7.25" fill="#1c4966" text-anchor="end" textLength="84.20" lengthAdjust="spacingAndGlyphs">View observations (JSON)</text>
<text x="509.00" y="522.11" font-size="7.25" fill="#2f3337">SoilTemperature700</text>
<text x="603.30" y="522.11" font-size="7.25" fill="#2f3337" textLength="26.30" lengthAdjust="spacingAndGlyphs">frequent</text>
<text x="661.10" y="522.11" font-size="7.25" fill="#2f3337" textLength="32.30" lengthAdjust="spacingAndGlyphs">27/7/2013</text>
<text x="702.90" y="522.11" font-size="7.25" fill="#2f3337" textLength="32.00" lengthAdjust="spacingAndGlyphs">27/1/2024</text>
<text x="788.40" y="522.11" font-size="7.25" fill="#2f3337" text-anchor="end">0/25°C</text>
<text x="832.00" y="522.11" font-size="7.25" fill="#2f3337" text-anchor="end">18°C</text>
<rect x="840.20" y="516.51" width="6.600" height="5.800" rx="0.600" fill="#1c4966"/><path d="M840.90 518.41h2.300v1.300h-2.300z M843.80 518.41h2.300v1.300h-2.300z M840.90 520.31h2.300v1.300h-2.300z M843.80 520.31h2.300v1.300h-2.300z" fill="#fff"/>
<text x="933.20" y="522.11" font-size="7.25" fill="#1c4966" text-anchor="end" textLength="84.20" lengthAdjust="spacingAndGlyphs">View observations (JSON)</text>
<text x="506.60" y="546.50" font-size="9.3" fill="#2f3337" textLength="107.10" lengthAdjust="spacingAndGlyphs">Showing 1 to 20 of 22 rows</text>
<text x="626.50" y="546.50" font-size="9.3" fill="#fff">20</text>
<path d="M641.500 544.800 l2.300 -2.600 l2.300 2.600z" fill="#fff"/>
<text x="656.30" y="546.50" font-size="9.3" fill="#2f3337" textLength="56.40" lengthAdjust="spacingAndGlyphs">rows per page</text>
<text x="871.80" y="546.80" font-size="9.3" fill="#1c4966" text-anchor="middle">‹</text>
<text x="889.80" y="546.80" font-size="9.3" fill="#fff" text-anchor="middle">1</text>
<text x="909.00" y="546.80" font-size="9.3" fill="#1c4966" text-anchor="middle">2</text>
<text x="927.00" y="546.80" font-size="9.3" fill="#1c4966" text-anchor="middle">›</text>
</svg>
</div>
</body></html>
